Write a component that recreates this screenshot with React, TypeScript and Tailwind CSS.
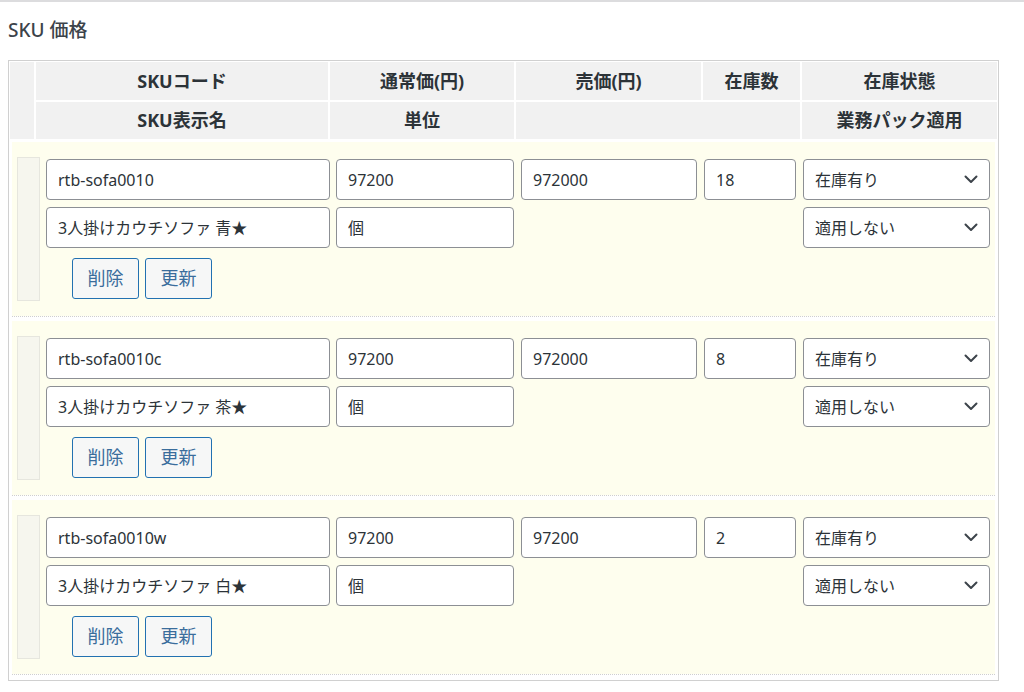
import React from "react";

const font = { fontFamily: '"Noto Sans", "Noto Sans CJK JP", sans-serif' };

function Chevron() {
  return (
    <svg width="14" height="9" viewBox="0 0 14 9" fill="none" className="shrink-0">
      <path d="M1.5 1.5 L7 7 L12.5 1.5" stroke="#3c434a" strokeWidth="2" strokeLinecap="round" strokeLinejoin="round" />
    </svg>
  );
}

function Input({ value }: { value: string }) {
  return (
    <div className="h-[41px] flex items-center rounded-[4px] border border-[#8c8f94] bg-white pl-[11px] text-[16px] text-[#2c3338] whitespace-nowrap overflow-hidden">
      {value}
    </div>
  );
}

function Select({ value }: { value: string }) {
  return (
    <div className="h-[41px] flex items-center justify-between rounded-[4px] border border-[#8c8f94] bg-white pl-[11px] pr-[11px] text-[16px] text-[#2c3338]">
      <span>{value}</span>
      <Chevron />
    </div>
  );
}

function Btn({ label }: { label: string }) {
  return (
    <div className="h-[41px] w-[67px] flex items-center justify-center rounded-[3px] border border-[#2271b1] bg-[#f6f7f7] text-[18px] text-[#3a6d9c]">
      {label}
    </div>
  );
}

type Sku = { code: string; price: string; sale: string; stock: string; name: string };

function SkuBlock({ sku }: { sku: Sku }) {
  return (
    <div className="border-b border-dotted border-[#cfcfcf] mb-[4px]">
      <div className="flex bg-[#fefeee] pl-[5px] pr-[5px] py-[15px]">
        <div className="w-[23px] shrink-0 bg-[#f6f6ee] border border-[#e6e6de]" />
        <div className="ml-[6px] flex-1 py-[2px]">
          <div className="grid grid-cols-[284px_178px_177px_93px_188px] gap-x-[6px] gap-y-[7px]">
            <Input value={sku.code} />
            <Input value={sku.price} />
            <div className="ml-[1px]"><Input value={sku.sale} /></div>
            <div className="ml-[1px]"><Input value={sku.stock} /></div>
            <div className="ml-[1px]"><Select value="在庫有り" /></div>
            <Input value={sku.name} />
            <Input value="個" />
            <div />
            <div />
            <div className="ml-[1px]"><Select value="適用しない" /></div>
          </div>
          <div className="flex gap-[6px] pl-[26px] mt-[10px]">
            <Btn label="削除" />
            <Btn label="更新" />
          </div>
        </div>
      </div>
    </div>
  );
}

const skus: Sku[] = [
  { code: "rtb-sofa0010", price: "97200", sale: "972000", stock: "18", name: "3人掛けカウチソファ 青★" },
  { code: "rtb-sofa0010c", price: "97200", sale: "972000", stock: "8", name: "3人掛けカウチソファ 茶★" },
  { code: "rtb-sofa0010w", price: "97200", sale: "97200", stock: "2", name: "3人掛けカウチソファ 白★" },
];

const th = "bg-[#f1f1f1] flex items-center justify-center text-[18px] font-bold text-[#2c3338]";

export default function App() {
  return (
    <div className="w-[1024px] h-[692px] bg-white overflow-hidden" style={font}>
      <div className="h-[3px] border-t-[2px] border-[#dcdcde] mt-0" />
      <div className="pl-[8px] pt-[14px] h-[57px] text-[19px] leading-[26px] text-[#3c434a] font-medium">SKU 価格</div>
      <div className="ml-[8px] w-[991px] border border-[#d0d0d0] p-[1px]">
        <div className="grid grid-cols-[24px_292px_184px_185px_97px_195px] grid-rows-[38px_37px] gap-[2px]">
          <div className="bg-[#f1f1f1] row-span-2" />
          <div className={th}>SKUコード</div>
          <div className={th}>通常価(円)</div>
          <div className={th}>売価(円)</div>
          <div className={th}>在庫数</div>
          <div className={th}>在庫状態</div>
          <div className={th}>SKU表示名</div>
          <div className={th}>単位</div>
          <div className={`${th} col-span-2`} />
          <div className={th}>業務パック適用</div>
        </div>
        <div className="pt-[3px] pl-[2px] pr-[2px]">
          {skus.map((s) => (
            <SkuBlock key={s.code} sku={s} />
          ))}
        </div>
      </div>
    </div>
  );
}
